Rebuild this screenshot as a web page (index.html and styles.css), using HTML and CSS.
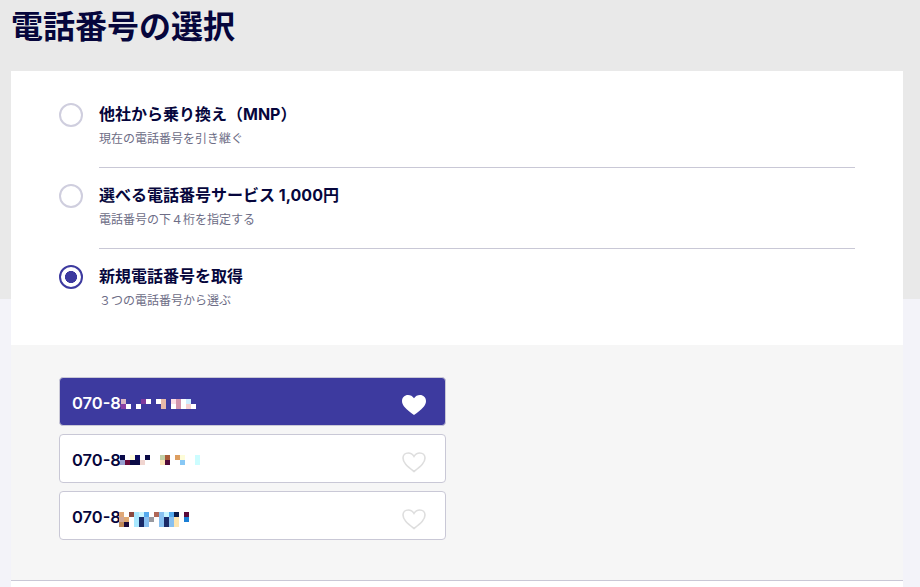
FILE: index.html
```html
<!DOCTYPE html>
<html lang="ja">
<head>
<meta charset="utf-8">
<title>電話番号の選択</title>
<link rel="stylesheet" href="styles.css">
</head>
<body>
<main class="page">
  <h1 class="title">電話番号の選択</h1>
  <section class="card">
    <div class="options">
      <div class="option">
        <span class="radio"></span>
        <div class="option-body">
          <div class="option-title">他社から乗り換え（MNP）</div>
          <div class="option-sub">現在の電話番号を引き継ぐ</div>
        </div>
      </div>
      <div class="option">
        <span class="radio"></span>
        <div class="option-body">
          <div class="option-title">選べる電話番号サービス 1,000円</div>
          <div class="option-sub">電話番号の下４桁を指定する</div>
        </div>
      </div>
      <div class="option">
        <span class="radio radio-on"></span>
        <div class="option-body">
          <div class="option-title">新規電話番号を取得</div>
          <div class="option-sub">３つの電話番号から選ぶ</div>
        </div>
      </div>
    </div>
    <div class="numbers">
      <div class="number number-on">
        <span class="digits">070-8</span>
        <svg class="mosaic mosaic-a" width="76" height="10" viewBox="121 399 76 10" shape-rendering="crispEdges">
          <rect x="121" y="399" width="5" height="5" fill="#d9b7c4"/><rect x="141" y="399" width="5" height="5" fill="#7e3a9e"/><rect x="146" y="399" width="5" height="5" fill="#fff"/><rect x="156" y="399" width="5" height="5" fill="#fff"/><rect x="161" y="399" width="5" height="5" fill="#e6b8a8"/><rect x="171" y="399" width="5" height="5" fill="#fbdde4"/><rect x="176" y="399" width="5" height="5" fill="#d295ad"/><rect x="181" y="399" width="5" height="5" fill="#fff"/><rect x="186" y="399" width="5" height="5" fill="#cfeeff"/>
          <rect x="121" y="404" width="5" height="5" fill="#8a3fa5"/><rect x="126" y="404" width="5" height="5" fill="#fff"/><rect x="136" y="404" width="5" height="5" fill="#fff"/><rect x="161" y="404" width="5" height="5" fill="#e6b8a8"/><rect x="171" y="404" width="5" height="5" fill="#fff"/><rect x="176" y="404" width="5" height="5" fill="#d295ad"/><rect x="181" y="404" width="5" height="5" fill="#fff"/><rect x="186" y="404" width="5" height="5" fill="#f5cfd0"/><rect x="191" y="404" width="5" height="5" fill="#fff"/>
        </svg>
        <svg class="heart" width="26" height="22" viewBox="0 0 26 22"><path d="M13 21C5 15 1 11.500 1 6.900 1 3.500 3.700 1 7 1c2.400 0 4.700 1.200 6 3.300C14.300 2.200 16.600 1 19 1c3.300 0 6 2.500 6 5.900C25 11.500 21 15 13 21Z" fill="#fff"/></svg>
      </div>
      <div class="number">
        <span class="digits">070-8</span>
        <svg class="mosaic mosaic-b" width="80" height="10" viewBox="120 455 80 10" shape-rendering="crispEdges">
          <rect x="120" y="455" width="5" height="5" fill="#0a0a4a"/><rect x="130" y="455" width="5" height="5" fill="#fefcdc"/><rect x="135" y="455" width="5" height="5" fill="#0a0a60"/><rect x="145" y="455" width="5" height="5" fill="#0a0a45"/><rect x="160" y="455" width="5" height="5" fill="#c2d0a8"/><rect x="165" y="455" width="5" height="5" fill="#a85a38"/><rect x="175" y="455" width="5" height="5" fill="#dd9e60"/><rect x="180" y="455" width="5" height="5" fill="#fdfcd8"/><rect x="195" y="455" width="5" height="5" fill="#ccfdff"/>
          <rect x="120" y="460" width="5" height="5" fill="#97a0d0"/><rect x="125" y="460" width="5" height="5" fill="#6a0a3a"/><rect x="130" y="460" width="10" height="5" fill="#0a0a45"/><rect x="140" y="460" width="5" height="5" fill="#f0d5d0"/><rect x="160" y="460" width="5" height="5" fill="#fce5b8"/><rect x="165" y="460" width="5" height="5" fill="#500a38"/><rect x="180" y="460" width="5" height="5" fill="#88c8f5"/><rect x="195" y="460" width="5" height="5" fill="#ccfdff"/>
        </svg>
        <svg class="heart" width="26" height="22" viewBox="0 0 26 22"><path d="M13 20.500C5.500 14.800 2 11.500 2 7.100 2 4.100 4.300 2 7.200 2c2.300 0 4.600 1.300 5.800 3.400C14.200 3.300 16.500 2 18.800 2 21.700 2 24 4.100 24 7.100 24 11.500 20.500 14.800 13 20.500Z" fill="none" stroke="#dedede" stroke-width="1.600"/></svg>
      </div>
      <div class="number">
        <span class="digits">070-8</span>
        <svg class="mosaic mosaic-c" width="70" height="15" viewBox="119 512 70 15" shape-rendering="crispEdges">
          <rect x="119" y="512" width="5" height="5" fill="#e0a878"/><rect x="129" y="512" width="5" height="5" fill="#8a4a40"/><rect x="134" y="512" width="5" height="15" fill="#a8e8ff"/><rect x="139" y="512" width="5" height="5" fill="#c8f5ff"/><rect x="144" y="512" width="5" height="5" fill="#55aaee"/><rect x="154" y="512" width="5" height="5" fill="#b06858"/><rect x="159" y="512" width="5" height="15" fill="#88c0f0"/><rect x="164" y="512" width="5" height="5" fill="#c8f5ff"/><rect x="169" y="512" width="5" height="5" fill="#55aaee"/><rect x="174" y="512" width="5" height="5" fill="#0a1a48"/><rect x="184" y="512" width="5" height="5" fill="#5a0a3a"/>
          <rect x="119" y="517" width="5" height="5" fill="#d0a898"/><rect x="124" y="517" width="5" height="5" fill="#e0a870"/><rect x="139" y="517" width="5" height="10" fill="#1a2a68"/><rect x="144" y="517" width="5" height="10" fill="#88c0f0"/><rect x="149" y="517" width="5" height="5" fill="#999aa0"/><rect x="164" y="517" width="5" height="10" fill="#1a2a68"/><rect x="169" y="517" width="5" height="10" fill="#88c0f0"/><rect x="174" y="517" width="5" height="10" fill="#fde5b0"/><rect x="184" y="517" width="5" height="5" fill="#1a7fd5"/>
          <rect x="119" y="522" width="5" height="5" fill="#c08858"/><rect x="124" y="522" width="5" height="5" fill="#1a0a3a"/>
        </svg>
        <svg class="heart" width="26" height="22" viewBox="0 0 26 22"><path d="M13 20.500C5.500 14.800 2 11.500 2 7.100 2 4.100 4.300 2 7.200 2c2.300 0 4.600 1.300 5.800 3.400C14.200 3.300 16.500 2 18.800 2 21.700 2 24 4.100 24 7.100 24 11.500 20.500 14.800 13 20.500Z" fill="none" stroke="#dedede" stroke-width="1.600"/></svg>
      </div>
    </div>
  </section>
</main>
</body>
</html>
```
FILE: styles.css
```css
* { box-sizing: border-box; }
html, body { margin: 0; height: 100%; }
body {
  background: linear-gradient(#e9e9e9 0, #e9e9e9 299px, #f3f3f9 299px, #f3f3f9 100%);
  font-family: Inter, "Noto Sans CJK JP", sans-serif;
  color: #06063c;
  overflow: hidden;
}
.page { padding: 0 17px 0 11px; }
.title {
  margin: 0;
  height: 71px;
  padding-top: 7px;
  font-size: 32px;
  line-height: 40px;
  font-weight: 700;
}
.card { background: #fff; height: 516px; }
.options { padding: 16px 48px 0; height: 274px; }
.option { display: flex; gap: 16px; height: 81px; }
.radio {
  flex: none;
  width: 24px;
  height: 24px;
  margin-top: 16px;
  border: 2px solid #cfcede;
  border-radius: 50%;
  background: #fff;
}
.radio-on {
  border-color: #3d3a9f;
  background: radial-gradient(circle, #3d3a9f 0, #3d3a9f 5.700px, #fff 6.300px);
}
.option-body {
  flex: 1;
  height: 81px;
  padding-top: 15px;
  border-bottom: 1px solid #c9c8d6;
}
.option:last-child .option-body { border-bottom: 0; }
.option-title { font-size: 16px; line-height: 24px; font-weight: 700; }
.option-sub { font-size: 12px; line-height: 18px; margin-top: 4px; color: #6d6d86; }
.numbers {
  background: #f6f6f6;
  height: 236px;
  padding: 32px 48px;
  display: flex;
  flex-direction: column;
  gap: 8px;
  border-bottom: 1px solid #c9c8d6;
}
.number {
  width: 387px;
  height: 49px;
  display: flex;
  align-items: center;
  padding: 2px 18px 0 12px;
  background: #fff;
  border: 1px solid #c9c8d6;
  border-radius: 4px;
  font-size: 16px;
  font-weight: 700;
}
.number-on { background: #3d3a9f; color: #fff; }
.digits { width: 48px; font-size: 16.500px; font-weight: 600; line-height: 20px; white-space: nowrap; }
.mosaic { flex: none; align-self: flex-start; }
.mosaic-a { margin: 19px 0 0 1px; }
.mosaic-b { margin: 18px 0 0 0; }
.mosaic-c { margin: 18px 0 0 -1px; }
.heart { flex: none; margin-left: auto; align-self: flex-start; margin-top: 14px; }
```
